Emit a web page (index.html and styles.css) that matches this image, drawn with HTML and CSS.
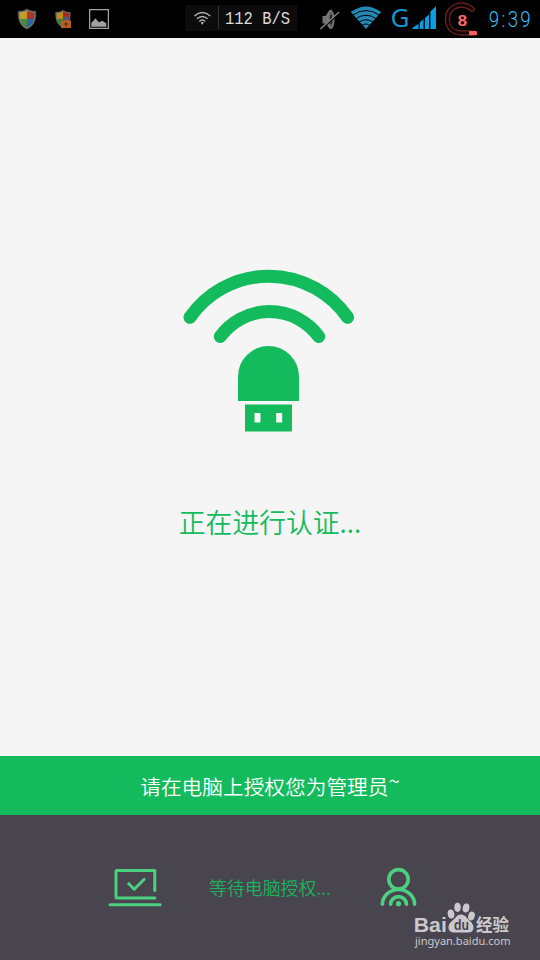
FILE: index.html
```html
<!DOCTYPE html>
<html lang="zh-CN">
<head>
<meta charset="utf-8">
<title>正在进行认证</title>
<link rel="stylesheet" href="styles.css">
</head>
<body>
<div class="screen">
  <header class="status">
    <svg class="shield" width="20" height="22" viewBox="17 8 20 22">
      <defs>
        <clipPath id="shape"><path d="M27 10.5C24.500 12 22 12.500 19.700 12.500C19.500 19.500 21 24.500 27 27.500C33 24.500 34.500 19.500 34.300 12.500C32 12.500 29.500 12 27 10.500Z"/></clipPath>
        <linearGradient id="gloss" x1="0" y1="0" x2="1" y2="1"><stop offset="0" stop-color="#fff" stop-opacity=".12"/><stop offset="1" stop-color="#000" stop-opacity=".15"/></linearGradient>
      </defs>
      <path d="M27 9C24 11 21 11.300 18.300 11.300C17.800 20 20 26 27 29C34 26 36.200 20 35.700 11.300C33 11.300 30 11 27 9Z" fill="#777" stroke="#5e5e5e" stroke-width=".6"/>
      <g clip-path="url(#shape)">
        <path d="M18 9h9v10h-9z" fill="#c39a18"/><path d="M27 9h9v10h-9z" fill="#ad2c1e"/>
        <path d="M18 19h9v10h-9z" fill="#3d8b35"/><path d="M27 19h9v10h-9z" fill="#2866ae"/>
        <path d="M18 9h18v20H18z" fill="url(#gloss)"/>
      </g>
    </svg>
    <svg class="shield-lock" width="18" height="20" viewBox="54 9 18 20">
      <path d="M63 10C60.500 11.700 58 12 55.400 12C55 19.500 56.800 25 63 27.700C69 25 71 19.500 70.600 12C68 12 65.500 11.700 63 10Z" fill="#666"/>
      <path d="M63 11.500C60.800 12.800 59 13 56.700 13V19H63Z" fill="#b98c1c"/>
      <path d="M63 11.500C65.200 12.800 67 13 69.300 13V19H63Z" fill="#a62a1e"/>
      <path d="M56.700 19H63v7.200C59 24.500 57 22 56.700 19Z" fill="#3c8030"/>
      <path d="M63.500 21v-1.500a2.200 2.200 0 0 1 4.400 0V21" fill="none" stroke="#2866a6" stroke-width="1.500"/>
      <path d="M61 20.500h10V28H61z" fill="#b85e20"/><path d="M64 24h4M66 22.500v4" stroke="#5b270c" stroke-width="1.200"/>
    </svg>
    <svg class="picture" width="20" height="20" viewBox="89 9 20 20">
      <path d="M89.600 9.600h18.800v18.800H89.600z" fill="none" stroke="#a2a2a2" stroke-width="1.300"/>
      <path d="M91.300 26.800v-4l1.700-1.500 2.500-3 2 2.500 1.500 1.500 3.500-1.500 2 1.500 1.800 1v3.500z" fill="#a2a2a2"/>
    </svg>
    <div class="speed">
      <svg class="speed-wifi" width="34" height="26" viewBox="185 5 34 26">
        <g fill="none" stroke="#b5b5b5" stroke-width="1.400"><path d="M194.300 16q8-6.800 16 0M197 18.800q5.300-4.600 10.600 0M199.300 21.400q3-2.800 6 0"/></g>
        <path d="M200.800 22.500q1.500-1 3 0l-1.500 2.300z" fill="#ccc"/>
        <path d="M218.500 6v23" stroke="#343434"/>
      </svg>
      <svg class="speed-value" width="78" height="26"><text x="6" y="19" textLength="65" lengthAdjust="spacingAndGlyphs">112 B/S</text></svg>
    </div>
    <svg class="mute" width="20" height="24" viewBox="320 8 20 24">
      <path d="M322.500 16h3l4-6q3.500-1.500 4 9.500t-4 9l-4-5h-3z" fill="#747474"/>
      <ellipse cx="331" cy="19.500" rx="3" ry="9" fill="#606060" stroke="#808080"/><ellipse cx="331" cy="19.500" rx="1" ry="5" fill="#181818"/>
      <path d="M320.500 30.500 339 13.500" stroke="#000" stroke-width="1.200"/><path d="M320.500 29 339 12" stroke="#858585" stroke-width="1.400"/>
    </svg>
    <svg class="wifi" width="32" height="24" viewBox="350 6 32 24">
      <path d="M350.700 12Q366 .8 381.300 12L366 29Z" fill="#2488b5"/>
      <g fill="none" stroke="#000" stroke-width="1"><path d="M352.500 15.300q13.500-9.500 27 0M355 19.200q11-8 22 0M358.300 22.500q7.700-5.500 15.400 0M361 26q5-4 10 0"/></g>
    </svg>
    <svg class="signal" width="50" height="32" viewBox="389 2 50 32">
      <text class="network" x="390.500" y="27">G</text>
      <g fill="#0c9ce0"><path d="M412.500 29v-1.300l6-3.700v5zM419.700 29v-6.500l3.800-3.500v10zM424.900 29V18l4.100-3.500V29zM430.400 29V11.500l5.600-5.200V29z"/></g>
    </svg>
    <svg class="gauge" width="34" height="36" viewBox="444 1 34 36">
      <path d="M472 9.200C462 1 447.500 6 447.500 19C447.500 28.500 454 33 462 33H471" fill="none" stroke="#702427" stroke-width="5.400" stroke-linecap="round"/>
      <path d="M472 9.200C462 1 447.500 6 447.500 19C447.500 28.500 454 33 462 33H471" fill="none" stroke="#120203" stroke-width="3" stroke-linecap="round"/>
      <rect x="469" y="31" width="8" height="4.200" rx="1.200" fill="#ff5c60"/>
      <text class="gauge-value" x="457.200" y="26">8</text>
    </svg>
    <svg class="clock" width="50" height="28"><text transform="scale(.87 1)" x="1 15.500 22.800 37" y="22">9:39</text></svg>
  </header>

  <main class="auth">
    <svg class="usb" width="172" height="164" viewBox="183 268 172 164">
      <g fill="none" stroke="#13bb5c" stroke-width="13" stroke-linecap="round">
        <path d="M190 317.300A96 96 0 0 1 347.500 317.300"/>
        <path d="M220.300 336.500A61 61 0 0 1 318.700 336.500"/>
      </g>
      <path d="M238 401V376.500a30.500 30.500 0 0 1 61 0V401Z" fill="#13bb5c"/>
      <path fill="#13bb5c" fill-rule="evenodd" d="M245 404.500h47v27h-47zM254.500 413v9.500h6V413zM276.200 413v9.500h6V413z"/>
    </svg>
    <h1 class="title">正在进行认证...</h1>
  </main>

  <section class="notice">请在电脑上授权您为管理员<span class="tilde">~</span></section>

  <footer class="footer">
    <svg class="laptop" width="54" height="40" viewBox="108 868 54 40">
      <g fill="none" stroke="#4bd080" stroke-width="3" stroke-linecap="round" stroke-linejoin="round"><path d="M154.800 890.500V870.500H117Q116 870.500 116 871.500V897Q116 898 117 898H154.800M110 904.700h50.200"/><path d="M128.700 883.700 134.200 889.200 144.200 879.300"/></g>
    </svg>
    <p class="waiting">等待电脑授权...</p>
    <svg class="person" width="38" height="40" viewBox="380 867 38 40">
      <g fill="none" stroke="#4bd080" stroke-width="3.600" stroke-linecap="round"><circle cx="398.500" cy="879.300" r="9.700"/><path d="M382.400 904.300a16.100 14.800 0 0 1 32.200 0M390.600 904.300a7.900 7.700 0 0 1 15.800 0"/></g>
      <circle cx="398.500" cy="903.700" r="2.600" fill="#4bd080"/>
    </svg>
    <svg class="brand" width="108" height="56" viewBox="409 898 108 56">
      <text class="brand-latin" x="413.800" y="931.500" textLength="33" lengthAdjust="spacingAndGlyphs">Bai</text>
      <g fill="#cbc9cd"><ellipse cx="451" cy="914" rx="3.300" ry="4.500" transform="rotate(-10 451 914)"/><ellipse cx="457.500" cy="907.300" rx="3.200" ry="4.600"/><ellipse cx="466" cy="908" rx="3.300" ry="4.500" transform="rotate(12 466 908)"/><ellipse cx="471.500" cy="916" rx="3.300" ry="4.400" transform="rotate(15 471.500 916)"/><path d="M461 914.500C465 914.500 467 918.500 469.500 920.500C476 926 474 932.500 468.500 932.500H454C447.500 932.500 446.500 925 452 921C456 918 456.500 914.500 461 914.500Z"/></g>
      <text class="brand-du" x="454" y="930" textLength="15" lengthAdjust="spacingAndGlyphs">du</text>
      <text class="brand-cjk" x="476" y="930.500" textLength="33" lengthAdjust="spacingAndGlyphs">经验</text>
      <text class="brand-url" x="415" y="944.500" textLength="95.500" lengthAdjust="spacingAndGlyphs">jingyan.baidu.com</text>
    </svg>
  </footer>
</div>
</body>
</html>
```
FILE: styles.css
```css
* { box-sizing: border-box; }
body { margin: 0; }
svg { display: block; flex: none; }
.screen {
  width: 540px;
  height: 960px;
  display: flex;
  flex-direction: column;
  background: #f5f5f5;
  font-family: KaiTi, STKaiti, "Noto Sans CJK SC", sans-serif;
}
.status {
  height: 38px;
  flex: none;
  display: flex;
  align-items: flex-start;
  background: #000;
}
.shield { margin: 8px 0 0 17px; }
.shield-lock { margin: 9px 0 0 17px; }
.picture { margin: 9px 0 0 17px; }
.speed {
  display: flex;
  width: 112px;
  height: 26px;
  margin: 5px 0 0 76px;
  background: #0c0c0c;
}
.speed-value {
  font: 18px "Liberation Mono", monospace;
  fill: #ddd;
}
.mute { margin: 8px 0 0 23px; }
.wifi { margin: 6px 0 0 10px; }
.signal { margin: 2px 0 0 7px; }
.network { font: 26px "Noto Sans", sans-serif; fill: #1594ce; }
.gauge { margin: 1px 0 0 5px; }
.gauge-value { font: bold 17px "Liberation Mono", monospace; fill: #ff6668; }
.clock {
  margin: 5px 0 0 10px;
  font: 300 21.5px Roboto, sans-serif;
  fill: #3cbcf2;
}
.auth {
  flex: 1;
  display: flex;
  flex-direction: column;
  align-items: center;
  padding-top: 230px;
}
.usb { margin-right: 2px; }
.title {
  margin: 73px 0 0;
  font-size: 26.8px;
  line-height: 34px;
  font-weight: 350;
  white-space: nowrap;
  color: #13bb5c;
}
.notice {
  height: 59px;
  flex: none;
  background: #13bb5c;
  color: #fff;
  font-size: 20.7px;
  font-weight: 350;
  line-height: 61px;
  text-align: center;
}
.tilde { position: relative; top: -6px; }
.footer {
  height: 145px;
  flex: none;
  display: flex;
  align-items: flex-start;
  background: #49454e;
}
.laptop { margin: 53px 0 0 108px; }
.waiting {
  width: 124px;
  margin: 60px 0 0 47px;
  font-size: 17.9px;
  font-weight: 350;
  line-height: 24px;
  white-space: nowrap;
  color: #18b55d;
}
.person { margin: 52px 0 0 47px; }
.brand { margin: 83px 0 0 -9px; fill: #cbc9cd; }
.brand-latin { font: bold 21px "Liberation Sans", sans-serif; }
.brand-du { font: bold 14px "Liberation Sans", sans-serif; fill: #49454e; }
.brand-cjk { font: bold 17px "Noto Sans CJK SC", sans-serif; }
.brand-url { font: 11.5px "Noto Sans", sans-serif; }
```
